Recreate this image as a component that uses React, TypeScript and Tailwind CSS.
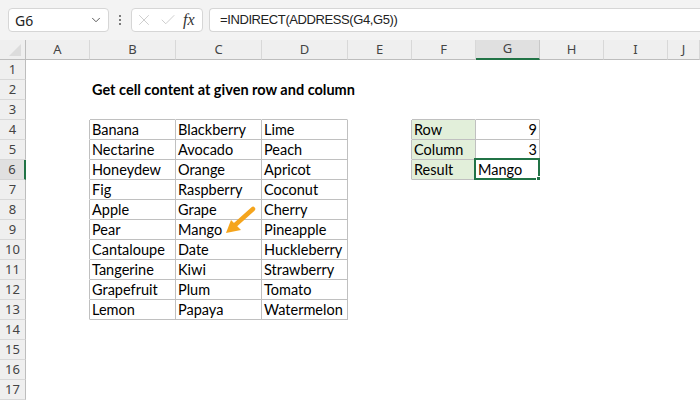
import { ChevronDown, X, Check } from "lucide-react";

const COLS = ["A", "B", "C", "D", "E", "F", "G", "H", "I", "J"];

const DATA: Record<string, string> = {
  "4-1": "Banana", "4-2": "Blackberry", "4-3": "Lime",
  "5-1": "Nectarine", "5-2": "Avocado", "5-3": "Peach",
  "6-1": "Honeydew", "6-2": "Orange", "6-3": "Apricot",
  "7-1": "Fig", "7-2": "Raspberry", "7-3": "Coconut",
  "8-1": "Apple", "8-2": "Grape", "8-3": "Cherry",
  "9-1": "Pear", "9-2": "Mango", "9-3": "Pineapple",
  "10-1": "Cantaloupe", "10-2": "Date", "10-3": "Huckleberry",
  "11-1": "Tangerine", "11-2": "Kiwi", "11-3": "Strawberry",
  "12-1": "Grapefruit", "12-2": "Plum", "12-3": "Tomato",
  "13-1": "Lemon", "13-2": "Papaya", "13-3": "Watermelon",
  "4-5": "Row", "4-6": "9",
  "5-5": "Column", "5-6": "3",
  "6-5": "Result", "6-6": "Mango",
};

// edge below cell (r,c) is drawn
const edgeB = (r: number, c: number) =>
  (c >= 1 && c <= 3 && r >= 3 && r <= 13) || (c >= 5 && c <= 6 && r >= 3 && r <= 6);
// edge right of cell (r,c) is drawn
const edgeR = (r: number, c: number) =>
  (r >= 4 && r <= 13 && c >= 0 && c <= 3) || (r >= 4 && r <= 6 && c >= 4 && c <= 6);

function Cell({ r, c }: { r: number; c: number }) {
  const text = DATA[`${r}-${c}`];
  const green = c === 5 && r >= 4 && r <= 6;
  const right = c === 6 && (r === 4 || r === 5);
  const selected = r === 6 && c === 6;
  return (
    <div
      className={[
        "relative h-[20px] border-b border-r flex items-center px-[2px] pt-[1px] text-[14.5px] leading-none text-black",
        edgeB(r, c) ? "border-b-[#c0c0c0]" : "border-b-transparent",
        edgeR(r, c) ? "border-r-[#c0c0c0]" : "border-r-transparent",
        green ? "bg-[#e2efda]" : "bg-white",
        right ? "justify-end" : "",
      ].join(" ")}
    >
      {r === 2 && c === 1 && (
        <span className="whitespace-nowrap font-bold absolute left-[2px] z-10">
          Get cell content at given row and column
        </span>
      )}
      {text && <span className="whitespace-nowrap">{text}</span>}
      {selected && (
        <>
          <div className="absolute -left-[2px] -top-[2px] w-[66px] h-[22px] border-2 border-[#217346]" />
          <div className="absolute left-[60px] top-[16px] w-[7px] h-[7px] bg-[#217346] border border-white" />
        </>
      )}
    </div>
  );
}

export default function App() {
  const rows = Array.from({ length: 17 }, (_, i) => i + 1);
  return (
    <div className="w-[700px] h-[400px] overflow-hidden bg-white relative" style={{ fontFamily: "Lato, 'Open Sans', sans-serif" }}>
      {/* Formula bar */}
      <div className="h-[40px] bg-[#f3f3f3] flex items-start pt-[8px] pl-[8px]">
        <div className="w-[101px] h-[24px] bg-white border border-[#d6d6d6] rounded-[4px] flex items-center justify-between pl-[6px] pr-[5px] font-['Noto_Sans'] text-[14px] text-[#222]">
          <span>G6</span>
          <ChevronDown size={14} strokeWidth={1.5} className="text-[#444]" />
        </div>
        <div className="w-[22px] h-[24px] flex flex-col items-center justify-center gap-[2px]">
          <span className="w-[2px] h-[2px] bg-[#555] rounded-full" />
          <span className="w-[2px] h-[2px] bg-[#555] rounded-full" />
          <span className="w-[2px] h-[2px] bg-[#555] rounded-full" />
        </div>
        <div className="w-[72px] h-[24px] bg-white border border-[#d6d6d6] rounded-[4px] flex items-center pl-[3px] gap-[6px]">
          <X size={18} strokeWidth={1} className="text-[#bdbdbd]" />
          <Check size={18} strokeWidth={1} className="text-[#bdbdbd]" />
          <span className="font-['Liberation_Serif'] italic text-[16px] text-[#333]">fx</span>
        </div>
        <div className="ml-[6px] flex-1 h-[24px] bg-white border border-r-0 border-[#d6d6d6] rounded-l-[4px] flex items-center pl-[10px] font-['Liberation_Sans'] text-[13px] tracking-[-0.4px] text-[#222]">
          =INDIRECT(ADDRESS(G4,G5))
        </div>
      </div>

      {/* Sheet */}
      <div className="grid grid-cols-[26px_64px_86px_86px_86px_64px_64px_64px_64px_64px_1fr]">
        <div className="h-[20px] bg-[#efefef] border-b border-r border-[#bdbdbd] relative">
          <div className="absolute right-[4px] bottom-[3px] w-0 h-0 border-l-[12px] border-l-transparent border-b-[12px] border-b-[#dcdcdc]" />
        </div>
        {COLS.map((l) => (
          <div
            key={l}
            className={[
              "h-[20px] border-b border-r flex items-center justify-center font-['Noto_Sans'] text-[13px] text-[#444]",
              l === "G"
                ? "bg-[#e0e0e0] border-b-2 border-b-[#217346] border-r-[#c8c8c8]"
                : "bg-[#efefef] border-b-[#bdbdbd] border-r-[#d8d8d8]",
            ].join(" ")}
          >
            {l}
          </div>
        ))}
        {rows.map((r) => (
          <Row key={r} r={r} />
        ))}
      </div>

      {/* Arrow */}
      <svg className="absolute left-[220px] top-[203px] pointer-events-none" width="40" height="36" viewBox="0 0 40 36">
        <line x1="33" y1="6" x2="14" y2="23" stroke="#f5a51d" strokeWidth="4.5" strokeLinecap="round" />
        <polygon points="6,30 11,17 21,27" fill="#f5a51d" />
      </svg>
    </div>
  );
}

function Row({ r }: { r: number }) {
  const active = r === 6;
  return (
    <>
      <div
        className={[
          "h-[20px] border-b border-r flex items-center justify-center font-['Noto_Sans'] text-[13px] text-[#444]",
          active
            ? "bg-[#e0e0e0] border-r-2 border-r-[#217346] border-b-[#d4d4d4]"
            : "bg-[#efefef] border-r-[#bdbdbd] border-b-[#d8d8d8]",
        ].join(" ")}
      >
        {r}
      </div>
      {COLS.map((_, c) => (
        <Cell key={c} r={r} c={c} />
      ))}
    </>
  );
}
